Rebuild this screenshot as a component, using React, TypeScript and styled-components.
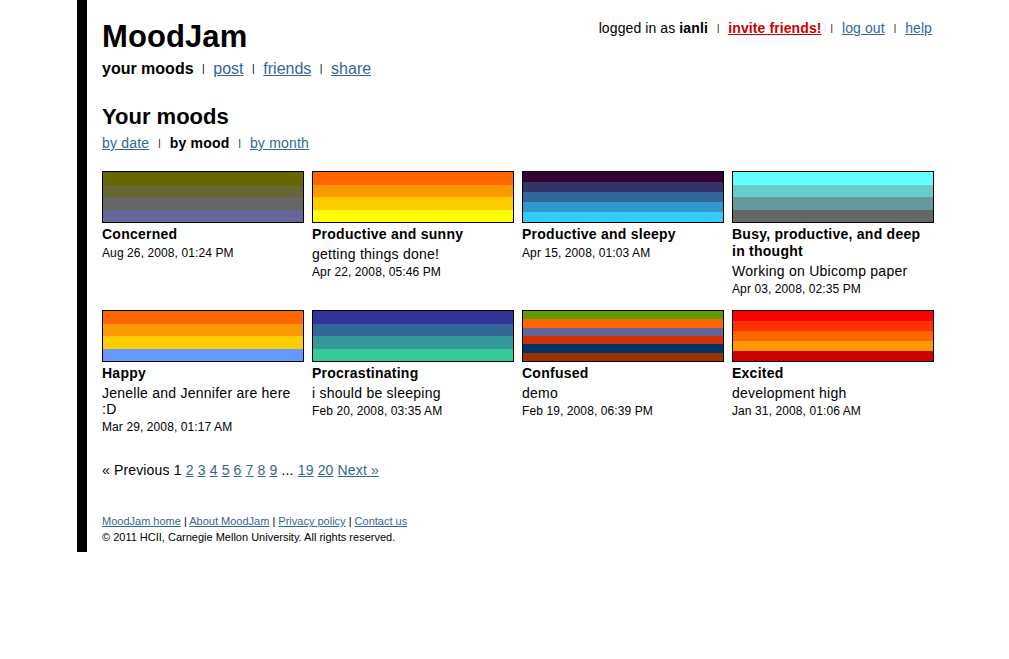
import React from "react";
import styled, { createGlobalStyle } from "styled-components";

const GlobalStyle = createGlobalStyle`
  html, body { margin: 0; padding: 0; background: #ffffff; }
  body { font-family: "Liberation Sans", Arial, Helvetica, sans-serif; color: #000; }
  a { color: #336699; }
`;

const Page = styled.div`
  margin-left: 77px;
  width: 832px;
  border-left: 10px solid #000;
  padding: 20px 0 7px 15px;
`;

const Header = styled.div`
  display: flex;
  justify-content: space-between;
  align-items: flex-start;
`;

const Logo = styled.h1`
  margin: 0;
  font-size: 31px;
  line-height: 34px;
  font-weight: bold;
  letter-spacing: 0.1px;
`;

const UserNav = styled.div`
  font-size: 14px;
  line-height: 16px;
  padding-right: 2px;
  white-space: nowrap;
  letter-spacing: 0.1px;
`;

const Invite = styled.a`
  color: #cc0000;
  font-weight: bold;
`;

const Sep = styled.span<{ $gap?: number }>`
  display: inline-block;
  margin: 0 ${(p) => p.$gap ?? 8}px;
  font-size: 0.66em;
  line-height: 1;
  vertical-align: 2px;
  letter-spacing: 0;
  color: #000;
`;

const MainNav = styled.div`
  margin-top: 6px;
  font-size: 16px;
  line-height: 18px;
`;

const Current = styled.b``;

const SectionTitle = styled.h2`
  margin: 26px 0 0;
  font-size: 22px;
  line-height: 26px;
  font-weight: bold;
`;

const SubNav = styled.div`
  margin-top: 5px;
  font-size: 14px;
  line-height: 16px;
  letter-spacing: 0.2px;
`;

const Grid = styled.div`
  margin-top: 20px;
  display: grid;
  grid-template-columns: repeat(4, 202px);
  column-gap: 8px;
  row-gap: 13px;
  align-items: start;
`;

const Item = styled.div`
  letter-spacing: 0.25px;
`;

const Swatch = styled.div`
  height: 50px;
  border: 1px solid #000;
  display: flex;
  flex-direction: column;
`;

const Stripe = styled.div<{ $c: string }>`
  flex: 1;
  background: ${(p) => p.$c};
`;

const MoodName = styled.div`
  margin-top: 3px;
  margin-bottom: 3px;
  font-size: 14px;
  line-height: 17px;
  font-weight: bold;
`;

const Desc = styled.div`
  font-size: 14px;
  line-height: 16px;
  margin-bottom: 3px;
`;

const Stamp = styled.div`
  margin-top: 2px;
  font-size: 12px;
  line-height: 15px;
  letter-spacing: 0.1px;
`;

const Pager = styled.div`
  margin-top: 27px;
  font-size: 14px;
  line-height: 16px;
  letter-spacing: 0.15px;
`;

const Footer = styled.div`
  margin-top: 35px;
  font-size: 11px;
  line-height: 16px;
`;

type Mood = { name: string; desc?: string; date: string; colors: string[] };

const moods: Mood[] = [
  {
    name: "Concerned",
    date: "Aug 26, 2008, 01:24 PM",
    colors: ["#666600", "#666633", "#666666", "#666699"],
  },
  {
    name: "Productive and sunny",
    desc: "getting things done!",
    date: "Apr 22, 2008, 05:46 PM",
    colors: ["#ff6600", "#ff9900", "#ffcc00", "#ffff00"],
  },
  {
    name: "Productive and sleepy",
    date: "Apr 15, 2008, 01:03 AM",
    colors: ["#330033", "#333366", "#336699", "#3399cc", "#33ccff"],
  },
  {
    name: "Busy, productive, and deep in thought",
    desc: "Working on Ubicomp paper",
    date: "Apr 03, 2008, 02:35 PM",
    colors: ["#66ffff", "#66cccc", "#669999", "#666666"],
  },
  {
    name: "Happy",
    desc: "Jenelle and Jennifer are here :D",
    date: "Mar 29, 2008, 01:17 AM",
    colors: ["#ff6600", "#ff9900", "#ffcc00", "#6699ff"],
  },
  {
    name: "Procrastinating",
    desc: "i should be sleeping",
    date: "Feb 20, 2008, 03:35 AM",
    colors: ["#333399", "#336699", "#339999", "#33cc99"],
  },
  {
    name: "Confused",
    desc: "demo",
    date: "Feb 19, 2008, 06:39 PM",
    colors: ["#669900", "#ff6600", "#666699", "#cc3300", "#003366", "#993300"],
  },
  {
    name: "Excited",
    desc: "development high",
    date: "Jan 31, 2008, 01:06 AM",
    colors: ["#ff0000", "#ff3300", "#ff6600", "#ff9900", "#cc0000"],
  },
];

export default function App() {
  return (
    <>
      <GlobalStyle />
      <Page>
        <Header>
          <div>
            <Logo>MoodJam</Logo>
            <MainNav>
              <Current>your moods</Current>
              <Sep $gap={8.5}>|</Sep>
              <a href="#">post</a>
              <Sep $gap={8.5}>|</Sep>
              <a href="#">friends</a>
              <Sep $gap={8.5}>|</Sep>
              <a href="#">share</a>
            </MainNav>
          </div>
          <UserNav>
            logged in as <b>ianli</b>
            <Sep $gap={9}>|</Sep>
            <Invite href="#">invite friends!</Invite>
            <Sep $gap={9}>|</Sep>
            <a href="#">log out</a>
            <Sep $gap={9}>|</Sep>
            <a href="#">help</a>
          </UserNav>
        </Header>

        <SectionTitle>Your moods</SectionTitle>
        <SubNav>
          <a href="#">by date</a>
          <Sep $gap={9}>|</Sep>
          <b>by mood</b>
          <Sep $gap={9}>|</Sep>
          <a href="#">by month</a>
        </SubNav>

        <Grid>
          {moods.map((m) => (
            <Item key={m.name}>
              <Swatch>
                {m.colors.map((c, i) => (
                  <Stripe key={i} $c={c} />
                ))}
              </Swatch>
              <MoodName>{m.name}</MoodName>
              {m.desc && <Desc>{m.desc}</Desc>}
              <Stamp>{m.date}</Stamp>
            </Item>
          ))}
        </Grid>

        <Pager>
          « Previous 1 <a href="#">2</a> <a href="#">3</a> <a href="#">4</a>{" "}
          <a href="#">5</a> <a href="#">6</a> <a href="#">7</a> <a href="#">8</a>{" "}
          <a href="#">9</a> ... <a href="#">19</a> <a href="#">20</a>{" "}
          <a href="#">Next »</a>
        </Pager>

        <Footer>
          <a href="#">MoodJam home</a> | <a href="#">About MoodJam</a> |{" "}
          <a href="#">Privacy policy</a> | <a href="#">Contact us</a>
          <br />© 2011 HCII, Carnegie Mellon University. All rights reserved.
        </Footer>
      </Page>
    </>
  );
}
